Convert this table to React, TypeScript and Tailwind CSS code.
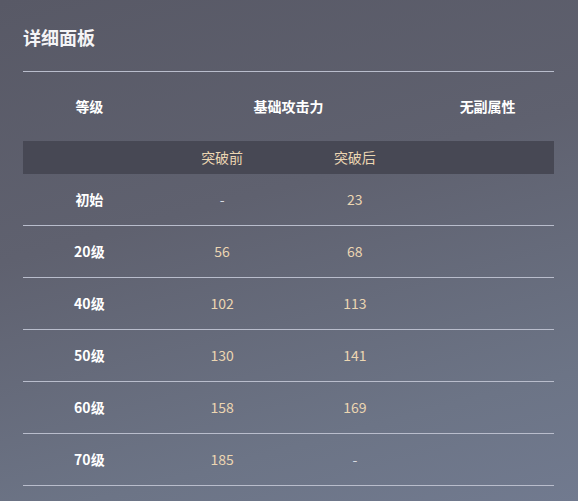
const rows = [
  { level: '初始', before: '-', after: '23' },
  { level: '20级', before: '56', after: '68' },
  { level: '40级', before: '102', after: '113' },
  { level: '50级', before: '130', after: '141' },
  { level: '60级', before: '158', after: '169' },
  { level: '70级', before: '185', after: '-' },
];

function Value({ v }: { v: string }) {
  return (
    <div className={v === '-' ? 'text-[#d9dbe2]' : 'text-[#ecd6b2]'}>{v}</div>
  );
}

export default function App() {
  return (
    <div
      className="min-h-screen w-full bg-[linear-gradient(165deg,#585966_0%,#5f616f_40%,#6c7486_80%,#717a8f_100%)] pl-[23px] pr-[24px] pt-[25px] pb-[16px]"
      style={{ fontFamily: '"Noto Sans CJK SC", "Noto Sans", sans-serif' }}
    >
      {/* 标题 */}
      <h2 className="text-[18px] leading-[24px] font-bold text-[#f4f4f6]">详细面板</h2>

      <div className="mt-[22px] border-t border-[#b9bdcc]">
        {/* 表头 */}
        <div className="grid grid-cols-4 h-[69px] items-center text-center text-[14px] font-bold text-white">
          <div>等级</div>
          <div className="col-span-2">基础攻击力</div>
          <div>无副属性</div>
        </div>

        <div className="grid grid-cols-4 h-[33px] items-center text-center text-[14px] bg-[#474854] text-[#ecd6b2]">
          <div />
          <div>突破前</div>
          <div>突破后</div>
          <div />
        </div>

        {rows.map((r) => (
          <div
            key={r.level}
            className="grid grid-cols-4 h-[52px] items-center text-center text-[14px] border-b border-[#b9bdcc]"
          >
            <div className="font-bold text-white">{r.level}</div>
            <Value v={r.before} />
            <Value v={r.after} />
            <div />
          </div>
        ))}
      </div>
    </div>
  );
}
